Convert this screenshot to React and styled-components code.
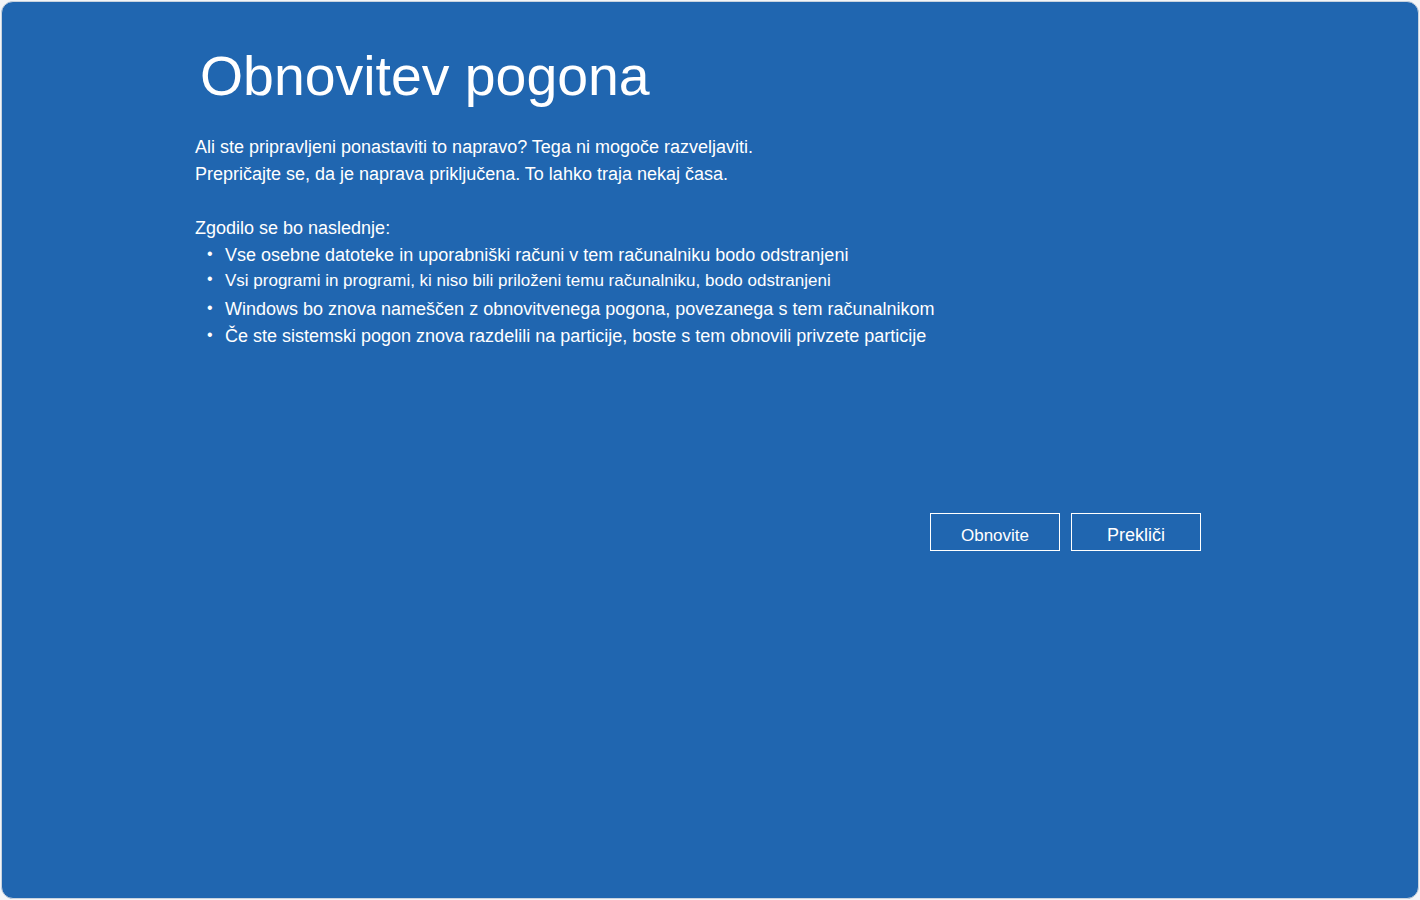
import styled, { createGlobalStyle } from "styled-components"

const GlobalStyle = createGlobalStyle`
  html, body {
    margin: 0;
    padding: 0;
    background: #f4f6f8;
  }
  body {
    font-family: "Liberation Sans", Arial, sans-serif;
  }
`

const Screen = styled.div`
  box-sizing: border-box;
  margin: 1px;
  height: 898px;
  border-radius: 12px;
  background: #2066b0;
  border: 1px solid #c9d3de;
  color: #fff;
  display: flex;
  justify-content: flex-start;
`

const Column = styled.div`
  width: 1006px;
  margin-left: 193px;
  padding-top: 47px;
  display: flex;
  flex-direction: column;
`

const Title = styled.h1`
  margin: 0 0 0 5px;
  font-weight: normal;
  font-size: 55.4px;
  line-height: 1;
`

const Lead = styled.p`
  margin: 30px 0 0 0;
  font-size: 18px;
  line-height: 27px;
`

const ListIntro = styled.p`
  margin: 27px 0 0 0;
  font-size: 18px;
  line-height: 27px;
`

const List = styled.ul`
  margin: 0;
  padding: 0 0 0 13px;
  list-style: none;
`

const Item = styled.li`
  position: relative;
  padding-left: 17px;
  font-size: ${p => (p.$small ? "17px" : "18px")};
  line-height: 27px;
  margin: ${p => (p.$small ? "-2px 0 2px 0" : "0")};

  &::before {
    content: "•";
    position: absolute;
    left: -1px;
    top: -2px;
    font-size: 16px;
    line-height: 27px;
  }
`

const Actions = styled.div`
  display: flex;
  justify-content: flex-end;
  gap: 11px;
  margin-top: 163px;
`

const Button = styled.button`
  box-sizing: border-box;
  width: 130px;
  height: 38px;
  padding: 7px 0 0 0;
  background: transparent;
  border: 1px solid #fff;
  color: #fff;
  font-family: "Liberation Sans", Arial, sans-serif;
  font-size: ${p => (p.$strong ? "18px" : "17px")};
  cursor: pointer;
`

export default function App() {
  return (
    <>
      <GlobalStyle />
      <Screen>
        <Column>
          <Title>Obnovitev pogona</Title>
          <Lead>
            Ali ste pripravljeni ponastaviti to napravo? Tega ni mogoče razveljaviti.
            <br />
            Prepričajte se, da je naprava priključena. To lahko traja nekaj časa.
          </Lead>
          <ListIntro>Zgodilo se bo naslednje:</ListIntro>
          <List>
            <Item>Vse osebne datoteke in uporabniški računi v tem računalniku bodo odstranjeni</Item>
            <Item $small>Vsi programi in programi, ki niso bili priloženi temu računalniku, bodo odstranjeni</Item>
            <Item>Windows bo znova nameščen z obnovitvenega pogona, povezanega s tem računalnikom</Item>
            <Item>Če ste sistemski pogon znova razdelili na particije, boste s tem obnovili privzete particije</Item>
          </List>
          <Actions>
            <Button>Obnovite</Button>
            <Button $strong>Prekliči</Button>
          </Actions>
        </Column>
      </Screen>
    </>
  )
}
